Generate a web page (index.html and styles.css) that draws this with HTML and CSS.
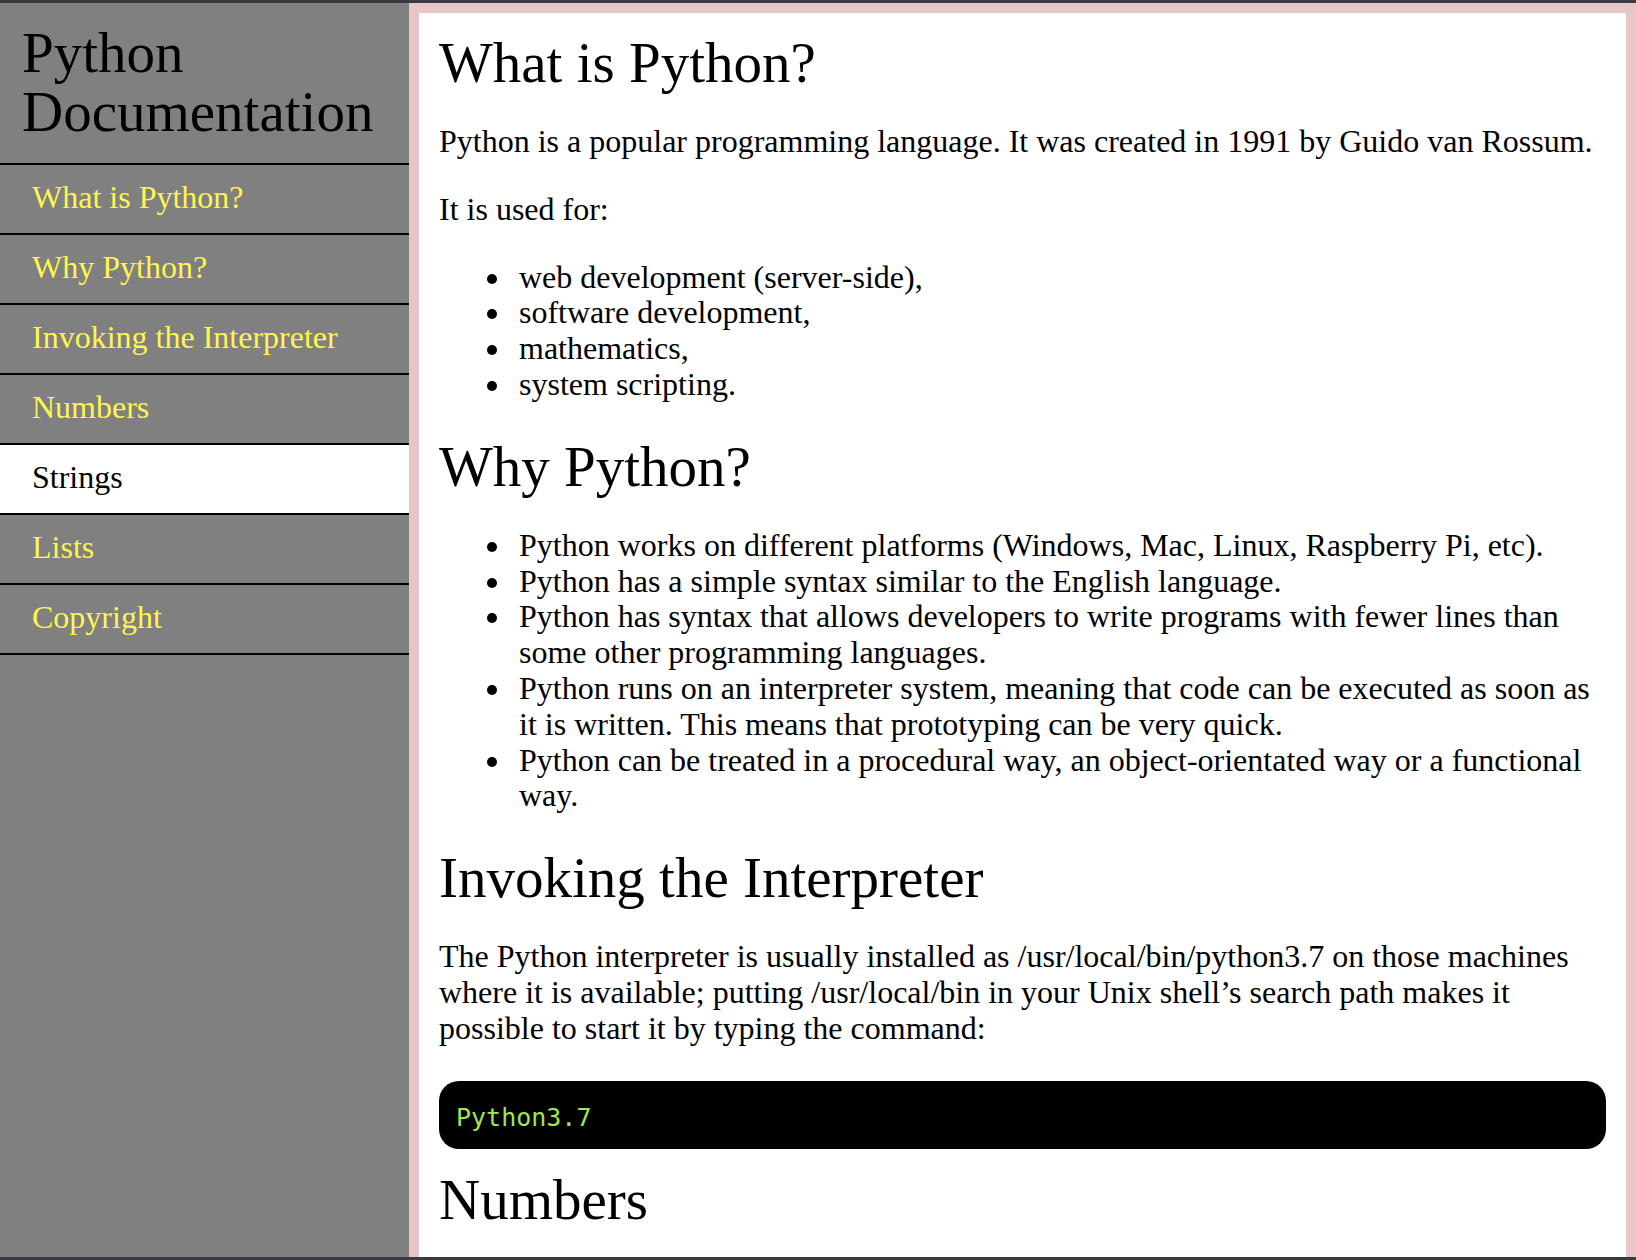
FILE: index.html
```html
<!DOCTYPE html>
<html lang="en">
<head>
<meta charset="utf-8">
<title>Python Documentation</title>
<link rel="stylesheet" href="styles.css">
</head>
<body>
<div class="frame">
  <nav class="sidebar">
    <header class="side-title">Python Documentation</header>
    <ul class="nav-list">
      <li class="nav-item"><a href="#what">What is Python?</a></li>
      <li class="nav-item"><a href="#why">Why Python?</a></li>
      <li class="nav-item"><a href="#invoking">Invoking the Interpreter</a></li>
      <li class="nav-item"><a href="#numbers">Numbers</a></li>
      <li class="nav-item active"><a href="#strings">Strings</a></li>
      <li class="nav-item"><a href="#lists">Lists</a></li>
      <li class="nav-item"><a href="#copyright">Copyright</a></li>
    </ul>
  </nav>
  <main class="main">
    <section id="what">
      <h1>What is Python?</h1>
      <p>Python is a popular programming language. It was created in 1991 by Guido van Rossum.</p>
      <p>It is used for:</p>
      <ul class="bullets">
        <li>web development (server-side),</li>
        <li>software development,</li>
        <li>mathematics,</li>
        <li>system scripting.</li>
      </ul>
    </section>
    <section id="why">
      <h1>Why Python?</h1>
      <ul class="bullets">
        <li>Python works on different platforms (Windows, Mac, Linux, Raspberry Pi, etc).</li>
        <li>Python has a simple syntax similar to the English language.</li>
        <li>Python has syntax that allows developers to write programs with fewer lines than some other programming languages.</li>
        <li>Python runs on an interpreter system, meaning that code can be executed as soon as it is written. This means that prototyping can be very quick.</li>
        <li>Python can be treated in a procedural way, an object-orientated way or a functional way.</li>
      </ul>
    </section>
    <section id="invoking">
      <h1>Invoking the Interpreter</h1>
      <p>The Python interpreter is usually installed as /usr/local/bin/python3.7 on those machines where it is available; putting /usr/local/bin in your Unix shell’s search path makes it possible to start it by typing the command:</p>
      <pre class="code"><code>Python3.7</code></pre>
    </section>
    <section id="numbers">
      <h1>Numbers</h1>
    </section>
  </main>
</div>
</body>
</html>
```
FILE: styles.css
```css
html, body {
  margin: 0;
  padding: 0;
  height: 100%;
}

body {
  background: #3a3a40;
  font-family: "Liberation Serif", "Times New Roman", serif;
  color: #000;
}

.frame {
  display: flex;
  height: 1254px;
  margin-top: 3px;
  overflow: hidden;
  background: #808080;
}

.sidebar {
  width: 409px;
  flex: 0 0 409px;
  background: #808080;
}

.side-title {
  font-size: 57px;
  line-height: 59px;
  padding: 20px 22px 22px;
  border-bottom: 2px solid #000;
}

.nav-list {
  list-style: none;
  margin: 0;
  padding: 0;
}

.nav-item {
  border-bottom: 2px solid #000;
}

.nav-item a {
  display: block;
  padding: 14px 32px 18px;
  line-height: 36px;
  font-size: 32px;
  color: #fff54f;
  text-decoration: none;
}

.nav-item.active {
  background: #fff;
}

.nav-item.active a {
  color: #000;
}

.main {
  flex: 1;
  background: #fff;
  border: 10px solid #e7c6c9;
  border-bottom: none;
  padding: 17px 20px 0;
  font-size: 32px;
  line-height: 35.8px;
  overflow: hidden;
}

.main h1 {
  font-size: 57px;
  line-height: 65px;
  font-weight: normal;
  margin: 18px 0 29px;
}

.main section:first-child h1 {
  margin-top: 0;
}

.main p {
  margin: 0 0 32px;
}

.bullets {
  list-style: none;
  margin: 0 0 31px;
  padding-left: 80px;
}

.bullets li {
  position: relative;
}

.bullets li::before {
  content: "";
  position: absolute;
  left: -32px;
  top: 14px;
  width: 10px;
  height: 10px;
  border-radius: 50%;
  background: #000;
}

.code {
  background: #000;
  color: #a0e84e;
  border-radius: 20px;
  padding: 23px 17px 15px;
  margin: 34px 0 16px;
  font-family: "Liberation Mono", "Courier New", monospace;
  font-size: 25px;
  line-height: 28px;
}
```
